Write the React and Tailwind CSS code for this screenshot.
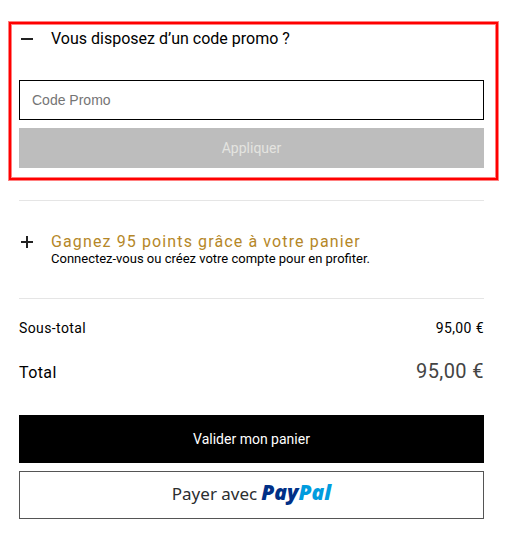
import { useState } from 'react';

function PlusMinusIcon({ open }) {
  return (
    <svg width="12" height="12" viewBox="0 0 12 12" className="shrink-0" aria-hidden="true">
      <rect x="0" y="5" width="12" height="2" fill="#222" />
      {!open && <rect x="5" y="0" width="2" height="12" fill="#222" />}
    </svg>
  );
}

export default function App() {
  const [promoOpen, setPromoOpen] = useState(true);
  const [code, setCode] = useState('');

  return (
    <main className="bg-white pt-[22px] pr-[18px] pb-[22px] pl-[9px] font-[Roboto,sans-serif] text-black">
      <section className="border-2 border-[#ff0000] pt-[3px] pr-3 pb-[10px] pl-2 shadow-[0_0_0_1px_#ff8080,inset_0_0_0_1px_#ff8080]">
        <button type="button" aria-expanded={promoOpen} onClick={() => setPromoOpen(!promoOpen)} className="flex w-full items-center gap-[18px] pl-[2px] text-left text-base leading-6">
          <PlusMinusIcon open={promoOpen} />
          Vous disposez d’un code promo ?
        </button>
        {promoOpen && (
          <form onSubmit={(e) => e.preventDefault()} className="mt-[29px] flex flex-col gap-2">
            <input type="text" aria-label="Code Promo" placeholder="Code Promo" value={code} onChange={(e) => setCode(e.target.value)} className="h-10 w-full border border-black px-3 font-['Liberation_Sans',sans-serif] text-sm placeholder:text-[#757575]" />
            <button type="submit" disabled={!code} className="h-10 w-full bg-[#bdbdbd] text-sm text-[#e4e4e0]">
              Appliquer
            </button>
          </form>
        )}
      </section>

      <div className="mt-5 pr-[14px] pl-[10px]">
        <section className="border-y border-[#e5e5e5] pt-[31px] pb-8">
          <button type="button" className="flex w-full items-start gap-[18px] pl-[2px] text-left">
            <span className="flex h-5 items-center">
              <PlusMinusIcon open={false} />
            </span>
            <span className="flex flex-col">
              <span className="text-base leading-5 tracking-[0.07em] text-[#b58728]">Gagnez 95 points grâce à votre panier</span>
              <span className="text-[13px] leading-[14px]">Connectez-vous ou créez votre compte pour en profiter.</span>
            </span>
          </button>
        </section>

        <dl className="tracking-wide">
          <div className="mt-[19px] flex items-center justify-between text-sm leading-5">
            <dt>Sous-total</dt>
            <dd>95,00 €</dd>
          </div>
          <div className="mt-[19px] flex items-baseline justify-between">
            <dt className="text-base leading-7">Total</dt>
            <dd className="text-xl leading-7 text-[#444]">95,00 €</dd>
          </div>
        </dl>

        <div className="mt-7 flex flex-col gap-2">
          <button type="button" className="h-12 w-full bg-black text-sm text-white">
            Valider mon panier
          </button>
          <button type="button" className="flex h-12 w-full items-baseline justify-center gap-1 border border-[#555] font-['Noto_Sans',sans-serif] text-[17px] leading-10 text-[#2c2e2f]">
            Payer avec
            <span className="font-['Open_Sans',sans-serif] text-[21px] leading-10 font-extrabold text-[#003087] italic">
              Pay<span className="text-[#009cde]">Pal</span>
            </span>
          </button>
        </div>
      </div>
    </main>
  );
}
